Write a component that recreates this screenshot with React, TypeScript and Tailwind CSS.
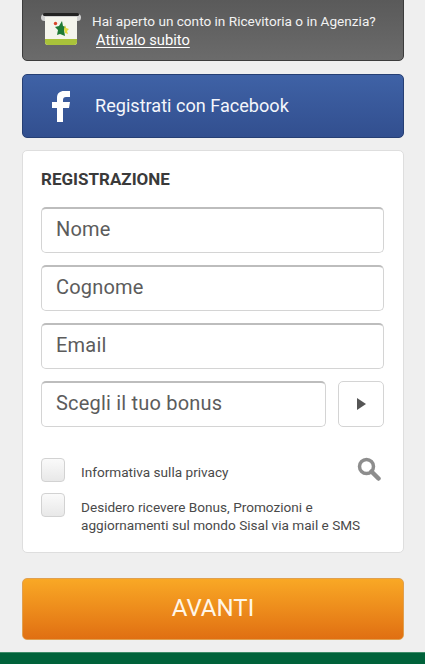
const font = { fontFamily: 'Roboto, sans-serif' }

function TextBox({ label, className = '' }: { label: string; className?: string }) {
  return (
    <div
      className={`h-[46px] flex items-center pl-[14px] pb-[3px] rounded-[5px] border border-[#d4d4d4] border-t-2 border-t-[#bdbdbd] bg-white text-[20px] text-[#5c5c5c] tracking-[0.2px] ${className}`}
    >
      {label}
    </div>
  )
}

function Check() {
  return (
    <div className="w-[24px] h-[24px] shrink-0 rounded-[4px] border border-[#d2d2d2] bg-gradient-to-b from-[#fafafa] to-[#e8e8e8]" />
  )
}

function TicketIcon() {
  return (
    <svg width="42" height="34" viewBox="0 0 42 34" className="shrink-0">
      <rect x="0" y="2" width="40" height="7" rx="3.500" fill="#d0d0d0" />
      <rect x="2" y="1" width="36" height="3" rx="1.500" fill="#222" />
      <path d="M4 5h32v25a3 3 0 0 1-3 3H7a3 3 0 0 1-3-3z" fill="#f4f4ec" />
      <path d="M4 27h32v3a3 3 0 0 1-3 3H7a3 3 0 0 1-3-3z" fill="#a9c23a" />
      <path d="M21 9l1 5 3 1-2 3 1 6-5-2-3 1 1-5-3-3 4-1z" fill="#1f7a35" />
      <path d="M24 13l1 3 3 1-2 2 1 3-3-1-1-4z" fill="#e3d93f" />
      <circle cx="14.500" cy="11.500" r="1.700" fill="#d8452c" />
    </svg>
  )
}

export default function App() {
  return (
    <div className="w-[425px] h-[664px] overflow-hidden flex flex-col bg-[#efefef]" style={font}>
      <div className="flex-1 pl-[22px] pr-[21px] flex flex-col">
        {/* Banner ricevitoria */}
        <div className="h-[62px] -mt-[1px] shrink-0 flex items-start rounded-b-[5px] border border-[#3c3c3c] bg-gradient-to-b from-[#5a5a5a] to-[#6b6b6b] pl-[18px]">
          <div className="mt-[12px]">
            <TicketIcon />
          </div>
          <div className="ml-[9px] mt-[11px] text-white">
            <div className="text-[13.600px] leading-[20px] text-[#f2f2f2]">Hai aperto un conto in Ricevitoria o in Agenzia?</div>
            <div className="mt-[-1px] ml-[4px] text-[14.700px] leading-[20px] underline underline-offset-2">Attivalo subito</div>
          </div>
        </div>

        {/* Facebook */}
        <div className="mt-[13px] h-[64px] flex items-center rounded-[5px] border border-[#263f74] bg-gradient-to-b from-[#3f62a6] to-[#324f8f] pl-[28px] shrink-0">
          <svg width="22" height="31" viewBox="0 0 22 31">
            <path d="M6 31V17H1v-6h5V7c0-5 3-7 7-7h6v6h-4c-2 0-3 1-3 3v2h7l-1 6h-6v14z" fill="#fff" />
          </svg>
          <span className="ml-[22px] text-[18.100px] text-[#f4f6fb]">Registrati con Facebook</span>
        </div>

        {/* Registrazione */}
        <div className="mt-[12px] h-[403px] shrink-0 rounded-[5px] border border-[#dedede] bg-white pl-[18px] pr-[19px] pt-[17px]">
          <div className="text-[17px] leading-[22px] font-bold text-[#3a3a3a]">REGISTRAZIONE</div>
          <div className="mt-[17px] flex flex-col gap-[12px]">
            <TextBox label="Nome" />
            <TextBox label="Cognome" />
            <TextBox label="Email" />
            <div className="flex gap-[12px]">
              <TextBox label="Scegli il tuo bonus" className="flex-1" />
              <div className="w-[46px] h-[46px] flex items-center justify-center rounded-[5px] border border-[#d4d4d4] bg-white">
                <svg width="9" height="12" viewBox="0 0 9 12">
                  <path d="M0 0l9 6-9 6z" fill="#555" />
                </svg>
              </div>
            </div>
          </div>
          <div className="mt-[31px] flex items-center">
            <Check />
            <span className="ml-[16px] mt-[4px] text-[13.600px] text-[#4a4a4a]">Informativa sulla privacy</span>
            <svg width="24" height="24" viewBox="0 0 24 24" className="ml-auto mr-[3px] -mt-[3px]">
              <circle cx="9.500" cy="9.500" r="7" fill="none" stroke="#8d8d8d" strokeWidth="3.500" />
              <path d="M14.500 14.500L21.500 21.500" stroke="#8d8d8d" strokeWidth="4.500" strokeLinecap="round" />
            </svg>
          </div>
          <div className="mt-[11px] flex items-start">
            <Check />
            <span className="ml-[16px] mt-[5px] text-[13.600px] leading-[18px] text-[#4a4a4a]">
              Desidero ricevere Bonus, Promozioni e
              <br />
              aggiornamenti sul mondo Sisal via mail e SMS
            </span>
          </div>
        </div>

        {/* Avanti */}
        <div className="mt-[25px] h-[62px] pb-[3px] shrink-0 flex items-center justify-center rounded-[5px] border border-[#e0a050] bg-gradient-to-b from-[#f9a825] to-[#e06f12] text-[24px] text-[#fff6e8]">
          AVANTI
        </div>
      </div>
      <div className="h-[12px] shrink-0 bg-[#00623a] border-t border-[#3d8b68]" />
    </div>
  )
}
